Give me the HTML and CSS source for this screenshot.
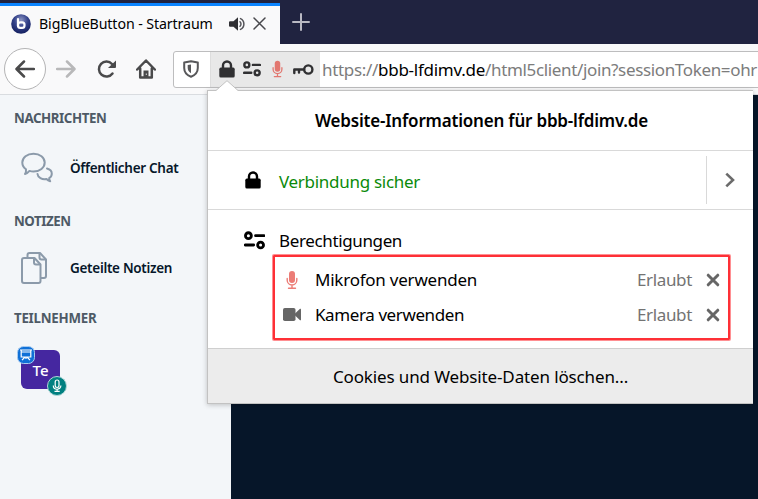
FILE: index.html
```html
<!DOCTYPE html>
<html lang="de">
<head>
<meta charset="utf-8">
<title>BigBlueButton - Startraum</title>
<link rel="stylesheet" href="styles.css">
</head>
<body>
<svg class="defs" width="0" height="0" aria-hidden="true">
  <symbol id="lock" viewBox="0 0 16 18"><path d="M4 8V5.500a4 4 0 0 1 8 0V8" fill="none" stroke="currentColor" stroke-width="2.400"/><rect x=".3" y="7.600" width="15.400" height="10" rx="1.600" fill="currentColor"/></symbol>
  <symbol id="perm" viewBox="0 0 20 18"><g fill="none" stroke="currentColor" stroke-width="2.700" stroke-linecap="round"><circle cx="4.200" cy="4.400" r="2.800"/><path d="M11 4.400h8M1.200 13.300h8"/><circle cx="15.800" cy="13.300" r="2.800"/></g></symbol>
  <symbol id="mic" viewBox="0 0 12 18"><rect x="3" y="0" width="6" height="12" rx="3" fill="currentColor"/><path d="M1.200 7.500V9.200a4.800 4.800 0 0 0 9.600 0V7.500M6 14v3M2.500 17.200h7" fill="none" stroke="currentColor" stroke-width="1.400" stroke-linecap="round"/></symbol>
  <symbol id="cross" viewBox="0 0 14 14"><path d="M2.200 2.200l9.600 9.600M11.800 2.200l-9.600 9.600" stroke="currentColor" stroke-width="3" stroke-linecap="round"/></symbol>
</svg>
<header class="tabs">
  <div class="tab">
    <svg class="favicon" width="20" height="20" viewBox="0 0 20 20"><defs><radialGradient id="ball" cx=".5" cy=".3" r=".7"><stop offset="0" stop-color="#8d97c4"/><stop offset=".5" stop-color="#34428a"/><stop offset="1" stop-color="#14205f"/></radialGradient></defs><circle cx="10" cy="10" r="9.800" fill="url(#ball)"/><path d="M7 5V12" stroke="#fff" stroke-width="2.200" stroke-linecap="round"/><rect x="7" y="8.300" width="6.500" height="5.600" rx="2.400" fill="none" stroke="#fff" stroke-width="2.200"/></svg>
    <span class="tab-title">BigBlueButton - Startraum</span>
    <svg class="sound" width="18" height="16" viewBox="0 0 18 16"><path d="M1 5.200h3.500L9 1.200v13.600l-4.500-4H1a1 1 0 0 1-1-1V6.200a1 1 0 0 1 1-1z" fill="#303034"/><path d="M11 5.700a3.200 3.200 0 0 1 0 4.600M11.500 2.600a6 6 0 0 1 0 10.800" fill="none" stroke="#55555a" stroke-width="1.500" stroke-linecap="round"/></svg>
    <svg class="close" width="13" height="13" viewBox="0 0 13 13"><path d="M1 1l11 11M12 1L1 12" stroke="#48484c" stroke-width="1.500" stroke-linecap="round"/></svg>
  </div>
  <svg class="plus" width="18" height="18" viewBox="0 0 18 18"><path d="M9 1v16M1 9h16" stroke="#b9b9c3" stroke-width="2" stroke-linecap="round"/></svg>
</header>
<nav class="toolbar">
  <span class="back"><svg width="20" height="18" viewBox="0 0 20 18"><path d="M19 9H1.800M9 1.500L1.500 9 9 16.500" fill="none" stroke="#4a4a4b" stroke-width="2.500" stroke-linecap="round" stroke-linejoin="round"/></svg></span>
  <svg class="forward" width="20" height="18" viewBox="0 0 20 18"><path d="M1 9h17.200M11 1.500L18.500 9 11 16.500" fill="none" stroke="#b8b8b9" stroke-width="2.500" stroke-linecap="round" stroke-linejoin="round"/></svg>
  <svg class="reload" width="20" height="20" viewBox="0 0 20 20"><path d="M15.500 14.500A7.500 7.500 0 1 1 15 5" fill="none" stroke="#4a4a4b" stroke-width="2.500" stroke-linecap="round"/><path d="M19 1.500V8a1 1 0 0 1-1 1h-7z" fill="#4a4a4b"/></svg>
  <svg class="home" width="20" height="20" viewBox="0 0 20 20"><path d="M1.200 10.500L10 1.500l8.800 9M4.200 9.500v9h11.600v-9" fill="none" stroke="#4a4a4b" stroke-width="2.500" stroke-linecap="round" stroke-linejoin="round"/><path d="M7.500 18v-6.500h5V18z" fill="#4a4a4b"/><path d="M10.300 14.500v1.500" stroke="#ddd" stroke-width="1"/></svg>
  <div class="urlbar">
    <svg class="shield" width="16" height="18" viewBox="0 0 16 18"><path d="M8 1.200L14.800 2.600V8c0 4-2.400 7-6.800 8.700C3.600 15 1.200 12 1.200 8V2.600z" fill="none" stroke="#58585a" stroke-width="2" stroke-linejoin="round"/><path d="M8 4.500v8.800C5.500 11.800 4.700 10 4.700 7.500V5.100z" fill="#58585a"/></svg>
    <div class="identity">
      <svg width="16" height="18"><use href="#lock"/></svg>
      <svg class="id-perm" width="18" height="16"><use href="#perm"/></svg>
      <svg class="id-mic" width="11" height="18"><use href="#mic"/></svg>
      <svg width="21" height="11" viewBox="0 0 21 11"><circle cx="15.300" cy="5.500" r="4.100" fill="none" stroke="#303032" stroke-width="2.400"/><path d="M11 5.500H1.300V9M6 5.500v3" fill="none" stroke="#303032" stroke-width="2.400" stroke-linecap="round" stroke-linejoin="round"/></svg>
    </div>
    <div class="url"><span class="u1">https://</span><b class="u2">bbb-lfdimv.de</b><span class="u3">/html5client/join?sessionToken=ohr</span></div>
  </div>
</nav>
<main class="page">
  <aside class="sidebar">
    <h2 class="h-news">NACHRICHTEN</h2>
    <div class="item chat">
      <svg width="32" height="32" viewBox="0 0 32 32"><g fill="none" stroke="#8b9aaa" stroke-width="2" stroke-linejoin="round" stroke-linecap="round"><path d="M12.500 1.800c6.400 0 11.200 3.800 11.200 8.800s-4.800 8.900-11.200 8.900c-1.400 0-2.800-.2-4-.6-1 1.200-2.500 2.500-4.500 3.100 1-1.600 1.200-3.200 1-4.700-2.300-1.600-3.700-4-3.700-6.700 0-5 4.800-8.800 11.200-8.800z"/><path d="M26 16.500c3 .8 4.800 2.700 4.800 5.300 0 1.800-1 3.400-2.600 4.400 0 1 .3 2 1 3-1.600-.4-2.800-1.200-3.700-2.200-4.500.8-8.700-1.500-9-5"/></g></svg>
      <span class="t-chat">Öffentlicher Chat</span>
    </div>
    <h2 class="h-notes">NOTIZEN</h2>
    <div class="item notes">
      <svg width="26" height="32" viewBox="0 0 26 32"><g fill="none" stroke="#8b9aaa" stroke-width="2" stroke-linejoin="round"><path d="M6.500 6V3a2 2 0 0 1 2-2H19l6 6.500V24a2 2 0 0 1-2 2h-3"/><path d="M18.500 1v4.500a2 2 0 0 0 2 2H25"/><path d="M3 6h10.500l6 6.500V29a2 2 0 0 1-2 2H3a2 2 0 0 1-2-2V8a2 2 0 0 1 2-2z"/><path d="M13 6v4.500a2 2 0 0 0 2 2h4.500"/></g></svg>
      <span class="t-notes">Geteilte Notizen</span>
    </div>
    <h2 class="h-users">TEILNEHMER</h2>
    <div class="avatar"><span>Te</span>
      <svg class="presenter" width="18" height="18" viewBox="0 0 18 18"><rect x=".5" y=".5" width="17" height="17" rx="6" fill="#0f70d7" stroke="#a8ccf0"/><path d="M3 4h12M4.200 4v7h9.600V4M4.200 6h9.600M8 11l-3 3.200M10 11l3 3.200M9 11v2" fill="none" stroke="#fff" stroke-width="1.200"/></svg>
      <svg class="voice" width="20" height="20" viewBox="0 0 20 20"><circle cx="10" cy="10" r="9.500" fill="#008081" stroke="#b2d8d8"/><rect x="8.200" y="4" width="3.800" height="7.500" rx="1.900" fill="none" stroke="#fff" stroke-width="1.200"/><path d="M6.300 9.500c0 5 7.600 5 7.600 0M10.100 13.200v2M7.500 15.300h5.200" fill="none" stroke="#fff" stroke-width="1.200"/></svg>
    </div>
  </aside>
  <section class="stage"></section>
</main>
<div class="panel">
  <svg class="arrow" width="26" height="12" viewBox="0 0 26 12"><path d="M0 10.500H2L13 .800l11 9.700h2V12H0z" fill="#fff"/><path d="M0 10.500H2L13 .700l11 9.800h2" fill="none" stroke="#c2c2c2"/></svg>
  <div class="head"><b class="p-head">Website-Informationen für bbb-lfdimv.de</b></div>
  <div class="conn">
    <svg class="c-lock" width="16" height="18"><use href="#lock"/></svg>
    <span class="p-conn">Verbindung sicher</span>
    <div class="more"><svg width="10" height="16" viewBox="0 0 10 16"><path d="M1.300 1.600L8 8l-6.700 6.400" fill="none" stroke="#6b6b6b" stroke-width="2.600"/></svg></div>
  </div>
  <div class="perms">
    <div class="perm-title"><svg width="21" height="19"><use href="#perm"/></svg><span class="p-perm">Berechtigungen</span></div>
    <div class="frame">
      <div class="perm"><svg class="mic" width="12" height="18"><use href="#mic"/></svg><span class="name p-mic">Mikrofon verwenden</span><span class="state">Erlaubt</span><svg class="x" width="14" height="14"><use href="#cross"/></svg></div>
      <div class="perm"><svg class="cam" width="18" height="13" viewBox="0 0 18 13"><rect width="12.500" height="13" rx="1.800" fill="#666"/><path d="M11 6.500L17 .800q1-.5 1 .7v10q0 1.200-1 .7z" fill="#666"/></svg><span class="name p-cam">Kamera verwenden</span><span class="state">Erlaubt</span><svg class="x" width="14" height="14"><use href="#cross"/></svg></div>
    </div>
  </div>
  <div class="foot"><span class="p-foot">Cookies und Website-Daten löschen...</span></div>
</div>
</body>
</html>
```

FILE: styles.css
```css
* { box-sizing: border-box; }
body { margin: 0; width: 758px; height: 499px; overflow: hidden; position: relative; background: #f9f9fa; font-family: "Noto Sans", sans-serif; font-size: 17px; color: #000; }
svg { display: block; flex: none; }
.defs { position: absolute; }
span, b { white-space: nowrap; }
.tabs { height: 44px; background: #202340; display: flex; align-items: flex-start; padding-top: 3px; }
.tab { width: 280px; height: 41px; background: #f9f9fa; border-top: 3px solid #0a84ff; display: flex; align-items: center; padding: 0 0 3px 11px; }
.tab-title { margin: 0 0 0 8px; width: 190px; font-size: 14.2px; letter-spacing: -.1px; }
.close { margin-left: 6px; }
.plus { margin: 10px 0 0 12px; }
.toolbar { height: 51px; background: #f9f9fa; border-bottom: 1px solid #d9dce0; display: flex; align-items: center; padding-left: 4px; }
.back { flex: none; width: 42px; height: 42px; border: 1px solid #b4b4b5; border-radius: 50%; background: #fff; display: flex; align-items: center; justify-content: center; }
.forward { margin-left: 10px; }
.reload { margin-left: 21px; }
.home { margin-left: 19px; }
.urlbar { margin-left: 17px; width: 600px; height: 37px; border: 1px solid #bdbdbe; border-radius: 3px; background: #fff; display: flex; align-items: center; flex: none; }
.shield { margin-left: 9px; }
.identity { margin-left: 11px; width: 110px; height: 35px; background: #e8e8e8; border-left: 1px solid #ddd; display: flex; align-items: center; padding-left: 8px; color: #303032; flex: none; }
.id-perm { margin-left: 8px; }
.id-mic { margin: 0 10px 0 11px; color: #e2766f; }
.url { color: #7c7c7c; margin-left: 2px; white-space: nowrap; display: flex; }
.url b { font-weight: 400; color: #000; }
.u1 { letter-spacing: -.32px; }
.u2 { letter-spacing: -.26px; }
.u3 { letter-spacing: -.35px; }
.page { display: flex; height: 404px; }
.sidebar { width: 231px; background: #f3f6f9; padding: 14px 0 0 14px; flex: none; }
.stage { flex: 1; background: #061629; }
h2 { margin: 0; height: 18px; font-size: 13.3px; line-height: 18px; font-weight: 700; color: #4e5a66; white-space: nowrap; letter-spacing: -.42px; }
.h-notes { letter-spacing: -.45px; }
.h-users { letter-spacing: -.25px; }
.item { display: flex; align-items: center; font-size: 13.5px; font-weight: 600; color: #06172a; }
.chat { height: 85px; padding: 0 0 3px 7px; }
.chat span { margin-left: 17px; letter-spacing: -.3px; }
.notes { height: 79px; padding: 0 0 4px 7px; }
.notes span { margin-left: 23px; letter-spacing: -.3px; }
.avatar { position: relative; width: 39px; height: 39px; margin: 23px 0 0 7px; border-radius: 6px; background: #4527a0; color: #fff; display: flex; align-items: center; justify-content: center; font-size: 15px; font-weight: 500; }
.presenter { position: absolute; left: -4px; top: -4px; }
.voice { position: absolute; left: 26px; top: 26px; }
.panel { position: absolute; left: 207px; top: 90px; width: 546px; height: 314px; background: #fff; border: 1px solid #c2c2c2; border-right: 0; box-shadow: 0 1px 5px rgba(0,0,0,.22); display: flex; flex-direction: column; }
.arrow { position: absolute; left: 6px; top: -11px; }
.head { height: 60px; border-bottom: 1px solid #d9d9d9; display: flex; align-items: center; justify-content: center; padding-left: 2px; }
.head b { font-weight: 600; letter-spacing: -.2px; }
.conn { height: 59px; border-bottom: 1px solid #d9d9d9; display: flex; align-items: center; padding-left: 37px; }
.p-conn { margin: 2px 0 0 18px; color: #0a8a0a; letter-spacing: -.29px; }
.more { margin-left: auto; width: 47px; height: 48px; border-left: 1px solid #d9d9d9; display: flex; align-items: center; padding-left: 18px; }
.perms { height: 138px; padding: 16px 0 0 36px; }
.perm-title { height: 28px; display: flex; align-items: center; }
.p-perm { margin-left: 14px; letter-spacing: -.365px; }
.frame { margin: 1px 0 0 29px; width: 457px; height: 85px; border: 2px solid #fe3036; border-radius: 1px; box-shadow: 0 0 0 1px #ff8f92; padding: 5px 8px 0 11px; }
.perm { height: 35px; display: flex; align-items: center; }
.mic { margin: 0 17px 0 0; color: #ec7c76; }
.cam { margin: 0 14px 0 -3px; }
.name { flex: 1; }
.p-mic { letter-spacing: -.23px; }
.p-cam { letter-spacing: -.4px; }
.state { width: 55px; color: #737373; letter-spacing: -.36px; }
.x { margin-left: 14px; color: #666; }
.foot { height: 55px; border-top: 1px solid #cfcfcf; background: #ececec; display: flex; align-items: center; justify-content: center; }
.p-foot { letter-spacing: -.13px; }
```
